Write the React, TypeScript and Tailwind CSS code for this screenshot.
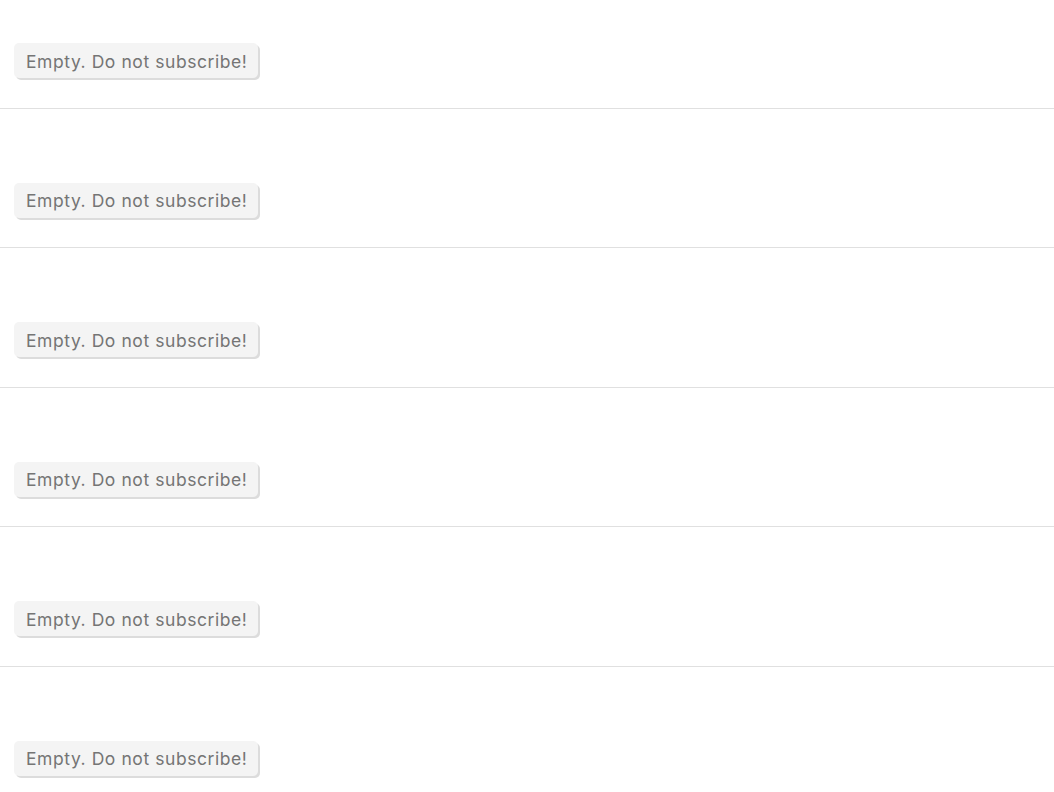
import React from "react";

function Row({ first }: { first?: boolean }) {
  return (
    <div
      className={`${first ? "pt-[43px]" : "pt-[74px]"} pb-[29.5px] pl-[14px] border-b border-[#e0e0e0]`}
    >
      <button
        className="h-[35px] pl-[12px] pr-[11px] pt-[2px] rounded-[5px] bg-[#f4f4f4] text-[#757575] text-[17.5px] tracking-[0.57px] shadow-[2px_2px_0_0_#dcdcdc] leading-none"
        style={{ fontFamily: "Inter, 'Noto Sans', sans-serif" }}
      >
        Empty. Do not subscribe!
      </button>
    </div>
  );
}

export default function App() {
  return (
    <div className="w-[1054px] h-[792px] overflow-hidden bg-white">
      <Row first />
      <Row />
      <Row />
      <Row />
      <Row />
      <Row />
    </div>
  );
}
